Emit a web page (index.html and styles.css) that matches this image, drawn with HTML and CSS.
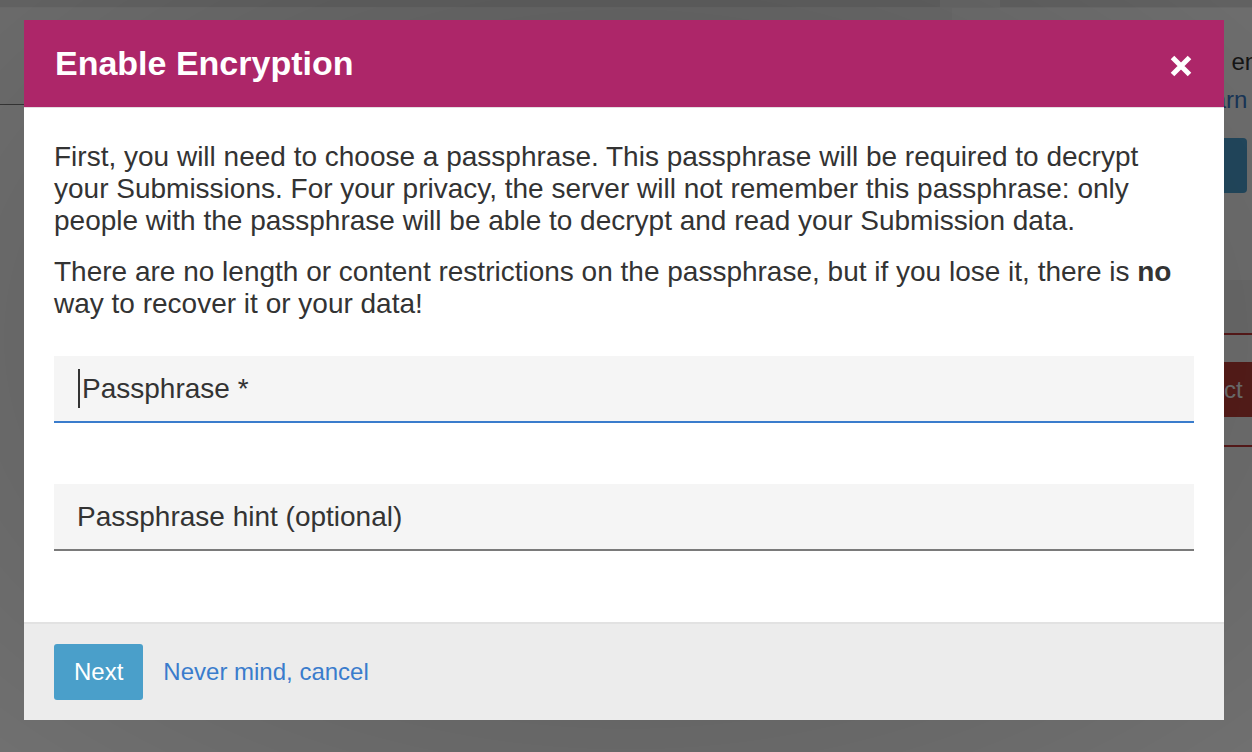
FILE: index.html
```html
<!doctype html>
<html>
  <head>
    <meta charset="utf-8">
    <meta name="viewport" content="width=device-width, initial-scale=1">
    <title>Enable Encryption</title>
    <link rel="stylesheet" href="styles.css">
  </head>
  <body>
    <div class="page">
      <div class="topbar"><span class="tab"></span></div>
      <div class="page-body">
        <div class="page-main">
          <div class="page-head"></div>
        </div>
        <div class="page-side">
          <p class="side-text">Turn on encryption</p>
          <a href="#" class="side-link">Learn more</a>
          <button class="side-btn">Enable</button>
          <div class="side-table">
            <div class="side-table-head"></div>
            <div class="side-table-row">
              <button class="side-danger">Disconnect</button>
            </div>
          </div>
        </div>
      </div>
    </div>
    <div class="backdrop"></div>

    <div class="modal">
      <div class="modal-head">
        <h1 class="modal-title">Enable Encryption</h1>
        <a href="#" class="close">
          <svg width="22" height="22" viewBox="0 0 22 22">
            <path d="M2.5 2.5 L19.5 19.5 M19.5 2.5 L2.5 19.5" stroke="#fff" stroke-width="5"/>
          </svg>
        </a>
      </div>
      <div class="modal-body">
        <p>First, you will need to choose a passphrase. This passphrase will be required to decrypt your Submissions. For your privacy, the server will not remember this passphrase: only people with the passphrase will be able to decrypt and read your Submission data.</p>
        <p>There are no length or content restrictions on the passphrase, but if you lose it, there is <strong>no</strong> way to recover it or your data!</p>
        <div class="fields">
          <label class="field focused"><span class="caret"></span>Passphrase *</label>
          <label class="field">Passphrase hint (optional)</label>
        </div>
      </div>
      <div class="modal-foot">
        <button class="btn-next">Next</button>
        <a href="#" class="cancel">Never mind, cancel</a>
      </div>
    </div>
  </body>
</html>
```

FILE: styles.css
```css
html, body {
    margin: 0;
    height: 100%;
    overflow: hidden;
}
body {
    font-family: "Liberation Sans", Arial, sans-serif;
    background: #fff;
    color: #333;
}

/* page behind the dialog */
.page {
    height: 100%;
}
.topbar {
    height: 7px;
    background: #e2e2e2;
    border-bottom: 1px solid #f4f4f4;
    position: relative;
}
.topbar .tab {
    position: absolute;
    left: 940px;
    top: 0;
    width: 60px;
    height: 7px;
    background: #f0f0f0;
}
.page-body {
    display: flex;
}
.page-main {
    flex: 1;
}
.page-head {
    height: 96px;
    background: #f7f7f7;
    border-bottom: 1px solid #7a7a7a;
}
.page-side {
    width: 300px;
    padding: 35px 0 0 234px;
    box-sizing: border-box;
    white-space: nowrap;
    font-size: 24px;
    line-height: 38px;
}
.side-text {
    margin: 0 0 0 -43px;
    color: #333;
}
.side-link {
    display: block;
    color: #3a7ccc;
    text-decoration: none;
}
.side-btn {
    display: block;
    margin: 19px 0 0 -60px;
    width: 121px;
    height: 55px;
    border: none;
    border-radius: 4px;
    background: #4fa6d8;
    color: #fff;
    font: 24px "Liberation Sans", Arial, sans-serif;
}
.side-table {
    margin: 87px 0 0 -80px;
}
.side-table-head {
    height: 53px;
    background: #f6f6f6;
    border-bottom: 2px solid #c93b3b;
}
.side-table-row {
    padding: 27px 0 28px;
    border-bottom: 2px solid #c93b3b;
}
.side-danger {
    display: block;
    width: 160px;
    height: 55px;
    border: none;
    background: #c5423b;
    color: #fff;
    font: 24px "Liberation Sans", Arial, sans-serif;
    text-align: left;
    padding-left: 18px;
}
.backdrop {
    position: fixed;
    inset: 0;
    background: radial-gradient(ellipse at 50% 45%, rgba(0,0,0,0.64) 30%, rgba(0,0,0,0.56) 100%);
}

/* dialog */
.modal {
    position: fixed;
    left: 24px;
    top: 20px;
    width: 1200px;
    background: #fff;
    color: #333;
}
.modal-head {
    display: flex;
    align-items: center;
    justify-content: space-between;
    height: 87px;
    padding: 0 32px 0 31px;
    background: #ad2669;
    border-bottom: 1px solid #e4dde1;
}
.modal-title {
    margin: 0;
    font-size: 34px;
    font-weight: bold;
    color: #fff;
}
.close {
    display: block;
    width: 22px;
    height: 22px;
    margin-top: 4px;
}
.close svg {
    display: block;
}
.modal-body {
    padding: 33px 30px 10px;
}
.modal-body p {
    margin: 0 0 19px;
    font-size: 28px;
    line-height: 32px;
}
.fields {
    margin-top: 36px;
}
.field {
    display: flex;
    align-items: center;
    height: 65px;
    padding-left: 23px;
    margin-bottom: 61px;
    background: #f5f5f5;
    border-bottom: 2px solid #7a7a7a;
    font-size: 28px;
    color: #333;
}
.field.focused {
    border-bottom-color: #3a7ccc;
}
.caret {
    display: inline-block;
    width: 2px;
    height: 39px;
    margin: 0 2px 0 1px;
    background: #333;
}
.modal-foot {
    display: flex;
    align-items: center;
    gap: 20px;
    padding: 20px 30px;
    background: #ececec;
    border-top: 2px solid #e2e2e2;
}
.btn-next {
    height: 56px;
    padding: 0 20px;
    border: none;
    border-radius: 3px;
    background: #4a9fca;
    color: #fff;
    font: 24px "Liberation Sans", Arial, sans-serif;
}
.cancel {
    font-size: 24px;
    color: #3a7ccc;
    text-decoration: none;
}
```
